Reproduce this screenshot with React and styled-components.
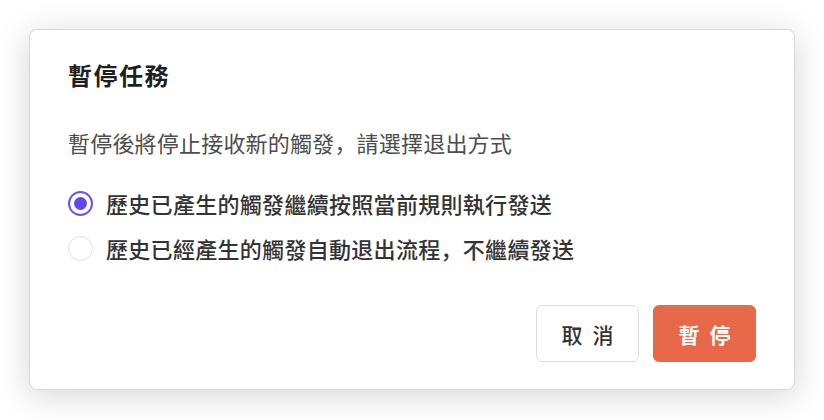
import React, { useState } from 'react';
import styled, { createGlobalStyle } from 'styled-components';

const GlobalStyle = createGlobalStyle`
  html, body {
    margin: 0;
    background: #ffffff;
  }
  body {
    font-family: 'Noto Sans CJK SC', 'Noto Sans CJK TC', 'Noto Sans', sans-serif;
  }
`;

const options = [
  { id: 'keep', label: '歷史已產生的觸發繼續按照當前規則執行發送' },
  { id: 'exit', label: '歷史已經產生的觸發自動退出流程，不繼續發送' },
];

function PauseDialog() {
  const [choice, setChoice] = useState('keep');

  return (
    <Page>
      <Dialog>
        <Title>暫停任務</Title>
        <Description>暫停後將停止接收新的觸發，請選擇退出方式</Description>
        <OptionList>
          {options.map((opt) => (
            <Option key={opt.id} onClick={() => setChoice(opt.id)}>
              <Radio checked={choice === opt.id} />
              <OptionLabel>{opt.label}</OptionLabel>
            </Option>
          ))}
        </OptionList>
        <Footer>
          <Button>取消</Button>
          <Button primary>暫停</Button>
        </Footer>
      </Dialog>
    </Page>
  );
}

export default function App() {
  return (
    <>
      <GlobalStyle />
      <PauseDialog />
    </>
  );
}

const Page = styled.div`
  padding: 29px;
`;

const Dialog = styled.div`
  box-sizing: border-box;
  width: 766px;
  height: 361px;
  padding: 34px 38px 27px;
  background: #fff;
  border: 1px solid rgba(0, 0, 0, 0.15);
  border-radius: 8px;
  box-shadow: 0 6px 34px rgba(0, 0, 0, 0.17);
  display: flex;
  flex-direction: column;
`;

const Title = styled.h2`
  margin: -1px 0 0;
  font-size: 24px;
  line-height: 24px;
  font-weight: 700;
  letter-spacing: 1.5px;
  color: #1f1f1f;
`;

const Description = styled.p`
  margin: 40px 0 0;
  font-size: 22px;
  line-height: 30px;
  font-weight: 400;
  letter-spacing: 0.2px;
  color: #4d4d4d;
`;

const OptionList = styled.div`
  margin-top: 30px;
  display: flex;
  flex-direction: column;
  gap: 13px;
`;

const Option = styled.label`
  display: flex;
  align-items: center;
  gap: 13px;
  height: 32px;
  cursor: pointer;
`;

const Radio = styled.span`
  box-sizing: border-box;
  flex: none;
  width: 25px;
  height: 25px;
  border-radius: 50%;
  border: ${(p) => (p.checked ? '2px solid #6a4ff2' : '1.5px solid #dedfe3')};
  display: flex;
  align-items: center;
  justify-content: center;
  &::after {
    content: '';
    display: ${(p) => (p.checked ? 'block' : 'none')};
    width: 13px;
    height: 13px;
    border-radius: 50%;
    background: #5f45f3;
  }
`;

const OptionLabel = styled.span`
  font-size: 22px;
  line-height: 32px;
  font-weight: 500;
  letter-spacing: 0.3px;
  color: #333;
`;

const Footer = styled.div`
  margin-top: auto;
  display: flex;
  justify-content: flex-end;
  gap: 14px;
`;

const Button = styled.button`
  box-sizing: border-box;
  width: 103px;
  height: 57px;
  padding: 0 0 0 10px;
  border-radius: 6px;
  font-family: inherit;
  font-size: 21px;
  letter-spacing: 10px;
  font-weight: ${(p) => (p.primary ? 600 : 500)};
  color: ${(p) => (p.primary ? '#fff' : '#333')};
  background: ${(p) => (p.primary ? '#e8694a' : '#fff')};
  border: 1px solid ${(p) => (p.primary ? '#e8694a' : '#dcdee3')};
  cursor: pointer;
`;
